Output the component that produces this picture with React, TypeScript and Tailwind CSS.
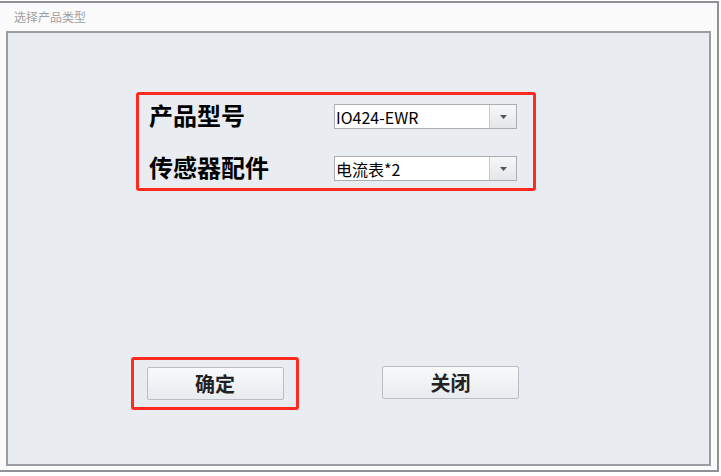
import React from "react";

const cjk = { fontFamily: '"Noto Sans CJK SC", "Noto Sans", sans-serif' };

function Combo({ value }: { value: string }) {
  return (
    <div className="flex h-[25px] w-[183px] border border-[#abadb3] bg-white">
      <div className="flex flex-1 items-center pl-[1px] text-[16px] leading-none text-black" style={cjk}>
        {value}
      </div>
      <div className="flex w-[27px] items-center justify-center border-l border-[#c8cacd] bg-gradient-to-b from-[#f6f7f8] to-[#e4e6e9]">
        <svg width="7" height="4" viewBox="0 0 7 4">
          <path d="M0 0 H7 L3.5 4 Z" fill="#555" />
        </svg>
      </div>
    </div>
  );
}

function Btn({ label }: { label: string }) {
  return (
    <div
      className="flex h-[33px] w-[137px] items-center justify-center rounded-[2px] border border-[#b9bcc0] bg-gradient-to-b from-[#f8f9fa] to-[#e8ebef] text-[20px] font-bold text-[#222]"
      style={cjk}
    >
      {label}
    </div>
  );
}

export default function App() {
  return (
    <div className="h-[476px] w-[721px] bg-white">
      <div className="ml-0 mt-[1px] flex h-[471px] w-[719px] flex-col border-2 border-[#8e9196] border-l-0 bg-[#fbfbfb]">
        <div className="flex h-[28px] items-center pl-[14px] text-[12px] text-[#a0a0a0]" style={cjk}>
          选择产品类型
        </div>
        <div className="ml-[6px] flex h-[435px] w-[705px] flex-col border-2 border-[#9a9da2] bg-[#e9ecf0]">
          <div className="ml-[128px] mt-[59px] flex h-[99px] w-[400px] flex-col rounded-[3px] border-[3px] border-[#ff2a1f] pl-[10px] pr-[16px]">
            <div className="mt-[9px] flex h-[25px] items-center justify-between">
              <span className="-mt-[4px] text-[24px] font-bold leading-none text-black" style={cjk}>产品型号</span>
              <Combo value="IO424-EWR" />
            </div>
            <div className="mt-[27px] flex h-[25px] items-center justify-between">
              <span className="-mt-[4px] text-[24px] font-bold leading-none text-black" style={cjk}>传感器配件</span>
              <Combo value="电流表*2" />
            </div>
          </div>
          <div className="mt-[166px] flex items-start">
            <div className="ml-[123px] flex h-[53px] w-[168px] items-center justify-center rounded-[3px] border-[3px] border-[#ff2a1f]">
              <Btn label="确定" />
            </div>
            <div className="ml-[83px] mt-[9px]">
              <Btn label="关闭" />
            </div>
          </div>
        </div>
      </div>
    </div>
  );
}
